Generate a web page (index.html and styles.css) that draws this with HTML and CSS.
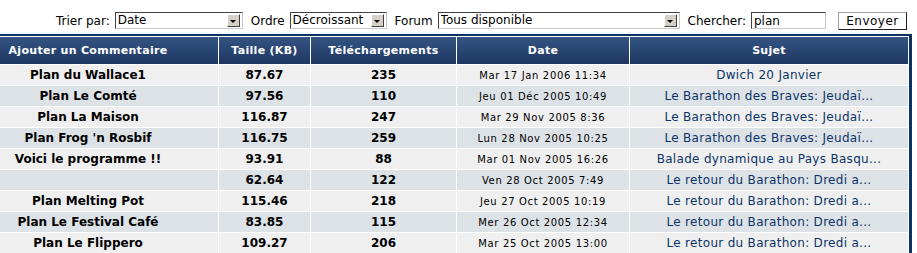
FILE: index.html
```html
<!DOCTYPE html>
<html lang="fr">
<head>
    <meta charset="UTF-8">
    <title>Plans</title>
    <link rel="stylesheet" href="styles.css">
</head>
<body>
    <form class="filters">
        <label>Trier par:</label>
        <span class="combo w-sort"><select><option>Date</option></select><span class="arrow"></span></span>
        <label>Ordre</label>
        <span class="combo w-order"><select><option>Décroissant</option></select><span class="arrow"></span></span>
        <label>Forum</label>
        <span class="combo w-forum"><select><option>Tous disponible</option></select><span class="arrow"></span></span>
        <label>Chercher:</label>
        <input class="search" type="text" value="plan">
        <button class="btn" type="button">Envoyer</button>
    </form>

    <div class="list">
        <table>
            <thead>
                <tr>
                    <th class="c-name">Ajouter un Commentaire</th>
                    <th class="c-size">Taille (KB)</th>
                    <th class="c-dl">Téléchargements</th>
                    <th class="c-date">Date</th>
                    <th class="c-subj">Sujet</th>
                </tr>
            </thead>
            <tbody id="rows"></tbody>
        </table>
    </div>

    <script>
        const files = [
            ['Plan du Wallace1', '87.67', 235, 'Mar 17 Jan 2006 11:34', 'Dwich 20 Janvier'],
            ['Plan Le Comté', '97.56', 110, 'Jeu 01 Déc 2005 10:49', 'Le Barathon des Braves: Jeudaï...'],
            ['Plan La Maison', '116.87', 247, 'Mar 29 Nov 2005 8:36', 'Le Barathon des Braves: Jeudaï...'],
            ['Plan Frog \'n Rosbif', '116.75', 259, 'Lun 28 Nov 2005 10:25', 'Le Barathon des Braves: Jeudaï...'],
            ['Voici le programme !!', '93.91', 88, 'Mar 01 Nov 2005 16:26', 'Balade dynamique au Pays Basqu...'],
            ['', '62.64', 122, 'Ven 28 Oct 2005 7:49', 'Le retour du Barathon: Dredi a...'],
            ['Plan Melting Pot', '115.46', 218, 'Jeu 27 Oct 2005 10:19', 'Le retour du Barathon: Dredi a...'],
            ['Plan Le Festival Café', '83.85', 115, 'Mer 26 Oct 2005 12:34', 'Le retour du Barathon: Dredi a...'],
            ['Plan Le Flippero', '109.27', 206, 'Mar 25 Oct 2005 13:00', 'Le retour du Barathon: Dredi a...']
        ];

        // Remplissage du tableau
        const tbody = document.getElementById('rows');
        files.forEach((f, i) => {
            const tr = document.createElement('tr');
            tr.className = i % 2 ? 'row2' : 'row1';
            tr.innerHTML = `
                <td class="c-name">${f[0]}</td>
                <td class="c-size">${f[1]}</td>
                <td class="c-dl">${f[2]}</td>
                <td class="c-date">${f[3]}</td>
                <td class="c-subj"><a href="#">${f[4]}</a></td>
            `;
            tbody.appendChild(tr);
        });
    </script>
</body>
</html>
```

FILE: styles.css
```css
body {
    margin: 0;
    font-family: "DejaVu Sans", Verdana, sans-serif;
    font-size: 11px;
    color: #000;
    background: #fff;
}
.filters {
    display: flex;
    justify-content: flex-end;
    align-items: center;
    height: 17px;
    padding: 12px 10px 5px 0;
    margin: 0;
    font-size: 12px;
}
.filters label {
    margin: 0 5px 0 8px;
}
.combo {
    display: flex;
    height: 17px;
    box-sizing: border-box;
    border: 1px solid;
    border-color: #404040 #c8c8c8 #c8c8c8 #404040;
    background: #fff;
}
.combo select {
    flex: 1;
    -webkit-appearance: none;
    appearance: none;
    border: none;
    background: transparent;
    font-family: inherit;
    font-size: 12px;
    padding: 0 2px;
    margin: 0;
    height: 15px;
    line-height: 15px;
    outline: none;
}
.combo .arrow {
    width: 13px;
    height: 13px;
    margin: 1px 2px 1px 0;
    box-sizing: border-box;
    background: #d4d0c8;
    border: 1px solid;
    border-color: #fff #404040 #404040 #fff;
    display: flex;
    align-items: center;
    justify-content: center;
}
.combo .arrow::after {
    content: "";
    border-left: 3px solid transparent;
    border-right: 3px solid transparent;
    border-top: 3px solid #000;
    margin-top: 1px;
}
.w-sort { width: 128px; }
.w-order { width: 97px; }
.w-forum { width: 242px; }
.search {
    width: 75px;
    height: 17px;
    box-sizing: border-box;
    border: 1px solid;
    border-color: #404040 #c8c8c8 #c8c8c8 #404040;
    font-family: inherit;
    font-size: 12px;
    padding: 0 2px;
    margin: 0;
    outline: none;
}
.btn {
    width: 69px;
    height: 18px;
    box-sizing: border-box;
    margin-left: 12px;
    padding: 0;
    border: 1px solid;
    border-color: #a0a0a0 #202020 #202020 #a0a0a0;
    background: #fff;
    font-family: inherit;
    font-size: 12px;
    letter-spacing: 0.5px;
    color: #000;
}
.list {
    margin: 0 5px 0 -4px;
    border: 3px solid #0a3263;
    border-top-width: 2px;
}
.list table {
    width: 100%;
    border-spacing: 1px;
    table-layout: fixed;
}
.list th {
    height: 27px;
    padding: 0;
    color: #fff;
    font-size: 11px;
    font-weight: bold;
    letter-spacing: 0.3px;
    background: linear-gradient(#345482, #1e3662);
}
.list td {
    height: 20px;
    padding: 0;
    text-align: center;
    white-space: nowrap;
    overflow: hidden;
}
.row1 td { background: #efefef; }
.row2 td { background: #dde2e7; }
th.c-name { width: 176px; padding-right: 42px; }
th.c-size { width: 91px; }
th.c-dl { width: 145px; }
th.c-date { width: 172px; }
td.c-name { padding-right: 42px; }
td.c-name, td.c-size, td.c-dl {
    font-size: 12px;
    font-weight: bold;
}
td.c-date {
    font-size: 10px;
    letter-spacing: 0.65px;
}
td.c-subj a {
    color: #0c3468;
    text-decoration: none;
    font-size: 12px;
    letter-spacing: 0.3px;
}
```
